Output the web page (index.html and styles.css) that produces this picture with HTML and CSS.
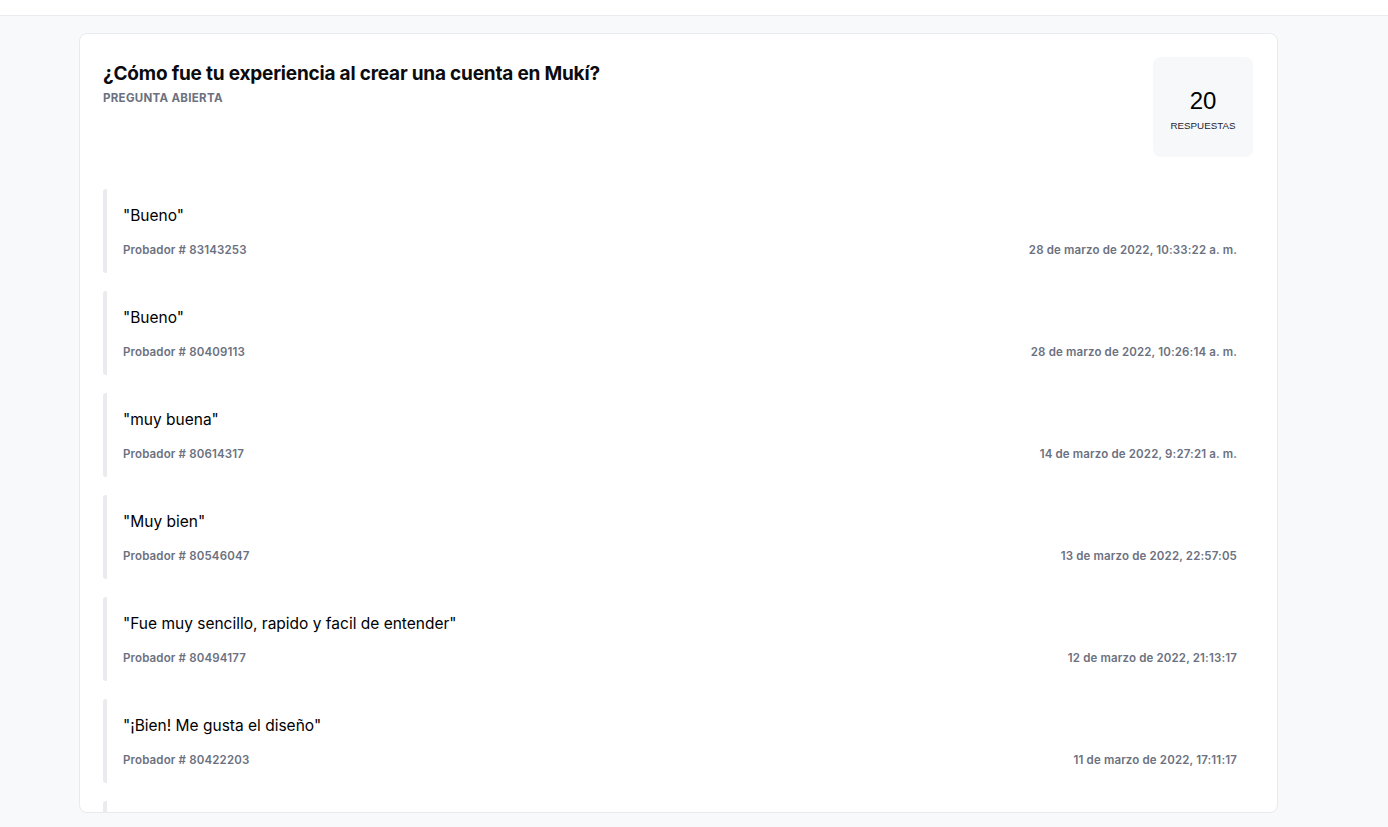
FILE: index.html
```html
<!DOCTYPE html>
<html lang="es">
<head>
<meta charset="utf-8">
<title>Respuestas</title>
<link rel="stylesheet" href="styles.css">
</head>
<body>
<div class="topbar"></div>
<main class="main">
  <section class="card">
    <header class="card-head">
      <div class="head-text">
        <h1 class="title">¿Cómo fue tu experiencia al crear una cuenta en Mukí?</h1>
        <div class="subtitle">PREGUNTA ABIERTA</div>
      </div>
      <div class="stat">
        <div class="stat-num">20</div>
        <div class="stat-label">RESPUESTAS</div>
      </div>
    </header>
    <ul class="answers">
      <li class="answer">
        <p class="answer-text">"Bueno"</p>
        <div class="meta"><span>Probador # 83143253</span><span>28 de marzo de 2022, 10:33:22 a. m.</span></div>
      </li>
      <li class="answer">
        <p class="answer-text">"Bueno"</p>
        <div class="meta"><span>Probador # 80409113</span><span>28 de marzo de 2022, 10:26:14 a. m.</span></div>
      </li>
      <li class="answer">
        <p class="answer-text">"muy buena"</p>
        <div class="meta"><span>Probador # 80614317</span><span>14 de marzo de 2022, 9:27:21 a. m.</span></div>
      </li>
      <li class="answer">
        <p class="answer-text">"Muy bien"</p>
        <div class="meta"><span>Probador # 80546047</span><span>13 de marzo de 2022, 22:57:05</span></div>
      </li>
      <li class="answer">
        <p class="answer-text">"Fue muy sencillo, rapido y facil de entender"</p>
        <div class="meta"><span>Probador # 80494177</span><span>12 de marzo de 2022, 21:13:17</span></div>
      </li>
      <li class="answer">
        <p class="answer-text">"¡Bien! Me gusta el diseño"</p>
        <div class="meta"><span>Probador # 80422203</span><span>11 de marzo de 2022, 17:11:17</span></div>
      </li>
      <li class="answer answer-peek"></li>
    </ul>
  </section>
</main>
</body>
</html>
```
FILE: styles.css
```css
* { box-sizing: border-box; }
html, body { margin: 0; padding: 0; }
body {
  background: #f8f9fb;
  font-family: "Inter", "Liberation Sans", sans-serif;
  color: #111;
  height: 827px;
  overflow: hidden;
}
.topbar {
  height: 16px;
  background: #fff;
  border-bottom: 1px solid #e9eaee;
}
.main {
  padding: 17px 110px 0 79px;
}
.card {
  width: 1199px;
  height: 780px;
  background: #fff;
  border: 1px solid #e9eaee;
  border-radius: 8px;
  padding: 23px 24px 0 23px;
  overflow: hidden;
}
.card-head {
  display: flex;
  justify-content: space-between;
  align-items: flex-start;
}
.head-text {
  padding-top: 2px;
}
.title {
  margin: 0;
  font-size: 19px;
  line-height: 30px;
  font-weight: 700;
  letter-spacing: -0.2px;
  color: #0b0b0f;
}
.subtitle {
  margin-top: 1px;
  font-size: 11.5px;
  line-height: 16px;
  font-weight: 700;
  color: #6b7180;
  letter-spacing: 0.3px;
}
.stat {
  width: 100px;
  height: 100px;
  background: #f7f8fa;
  border-radius: 8px;
  display: flex;
  flex-direction: column;
  align-items: center;
  justify-content: center;
}
.stat-num {
  font-family: "Liberation Sans", "Inter", sans-serif;
  font-size: 24px;
  line-height: 28px;
  color: #000;
  margin-top: 6px;
}
.stat-label {
  font-family: "Liberation Sans", "Inter", sans-serif;
  font-size: 9.8px;
  line-height: 14px;
  color: #1f2430;
  margin-top: 4px;
}
.answers {
  list-style: none;
  margin: 32px 0 0 0;
  padding: 0;
  display: flex;
  flex-direction: column;
  gap: 18px;
}
.answer {
  border-left: 4px solid #ebebef;
  border-radius: 3px;
  padding: 16px 16px 15px 16px;
}
.answer-peek {
  min-height: 84px;
}
.answer-text {
  margin: 0;
  font-size: 15.5px;
  line-height: 22px;
  color: #000;
}
.meta {
  margin-top: 15px;
  display: flex;
  justify-content: space-between;
  font-size: 11.5px;
  line-height: 16px;
  font-weight: 600;
  letter-spacing: 0.15px;
  color: #6b7180;
}
```
